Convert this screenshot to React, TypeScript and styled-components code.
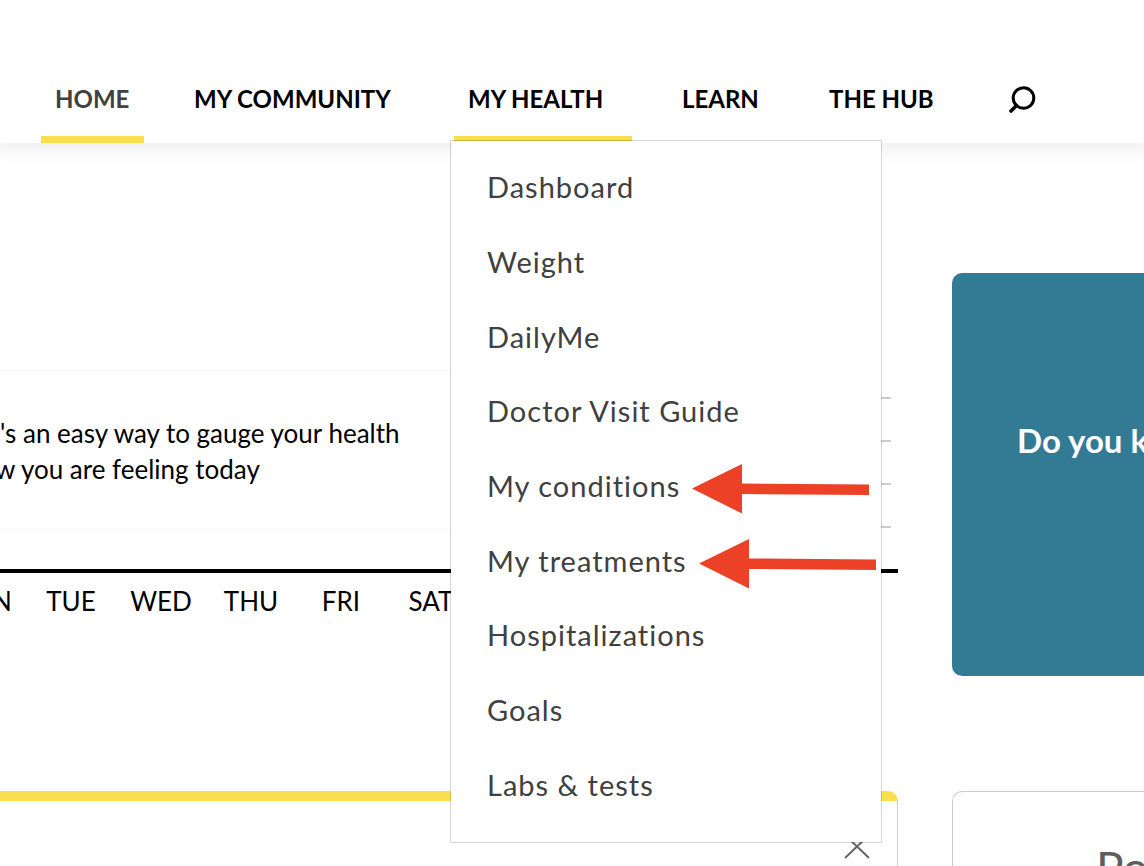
import React from "react";
import styled, { createGlobalStyle } from "styled-components";

const yellow = "#f9de4f";

const GlobalStyle = createGlobalStyle`
  *, *::before, *::after { box-sizing: border-box; }
  body {
    margin: 0;
    background: #fff;
    color: #000;
    font-family: Lato, "Open Sans", sans-serif;
    font-size: 26px;
    line-height: 36px;
    font-variant-ligatures: none;
  }
`;

const Page = styled.div`
  height: 100vh;
  overflow: hidden;
`;

const Header = styled.header`
  position: relative;
  z-index: 2;
  height: 143px;
  padding-top: 55px;
  background: #fff;
  box-shadow: 0 2px 18px 4px rgba(0, 0, 0, 0.08);
`;

const Nav = styled.nav`
  display: flex;
  gap: 36px;
  height: 100%;
  padding-left: 41px;
`;

const NavItem = styled.div<{ $width: number; $marked?: boolean }>`
  position: relative;
  flex: 0 0 ${(p) => p.$width}px;
  border-bottom: 7px solid ${(p) => (p.$marked ? yellow : "transparent")};
`;

const NavLink = styled.a<{ $current?: boolean }>`
  display: flex;
  align-items: center;
  height: 88px;
  padding-left: 14px;
  color: ${(p) => (p.$current ? "#404040" : "#000")};
  font-size: 24px;
  font-weight: 700;
  white-space: nowrap;
  text-decoration: none;
`;

const SearchButton = styled.button`
  display: flex;
  align-items: center;
  height: 90px;
  margin-left: 16px;
  padding: 0;
  border: 0;
  background: none;
`;

const Menu = styled.div`
  position: absolute;
  top: 85px;
  left: -4px;
  width: 432px;
  height: 703px;
  padding: 9px 0 0 36px;
  background: #fff;
  background-clip: padding-box;
  border: 1px solid rgba(0, 0, 0, 0.16);
`;

const MenuList = styled.ul`
  display: grid;
  grid-auto-rows: 1fr;
  height: 672px;
  margin: 0;
  padding: 0;
  list-style: none;
`;

const MenuRow = styled.li`
  display: flex;
  align-items: center;
  gap: 12px;
`;

const MenuLink = styled.a`
  color: #404040;
  font-size: 29px;
  letter-spacing: 1px;
  white-space: nowrap;
  text-decoration: none;
`;

const Columns = styled.main`
  display: grid;
  grid-template-columns: minmax(0, 1fr) 192px;
  column-gap: 54px;
`;

const Tracker = styled.section`
  padding-top: 227px;
`;

const Plot = styled.div`
  display: flex;
  align-items: flex-start;
  height: 203px;
  border-bottom: 4px solid #000;
`;

const Prompt = styled.p`
  flex: 1;
  height: 162px;
  margin: 0;
  padding-top: 44px;
  border: solid #f6f6f6;
  border-width: 1px 0;
  white-space: nowrap;
`;

const PromptLine = styled.span`
  display: block;

  & + & {
    margin-left: -5px;
  }
`;

const Ticks = styled.div`
  display: flex;
  flex-direction: column;
  gap: 41px;
  width: 60px;
  margin-right: 7px;
  padding-top: 27px;
`;

const Tick = styled.i`
  height: 2px;
  background: #ccc;
`;

const Days = styled.div`
  display: grid;
  grid-template-columns: 34px repeat(5, 90px);
  justify-items: center;
  margin: 10px 0 0 -8px;

  & > :first-child {
    justify-self: start;
  }
`;

const TipCard = styled.aside`
  height: 403px;
  margin-top: 130px;
  padding: 143px 0 0 65px;
  overflow: hidden;
  border-radius: 10px 0 0 10px;
  background: #337a95;
`;

const TipTitle = styled.h2`
  margin: 0;
  color: #fff;
  font-size: 33px;
  line-height: 48px;
  font-weight: 700;
  white-space: nowrap;
`;

const Panel = styled.section`
  display: flex;
  justify-content: flex-end;
  height: 160px;
  padding: 34px 27px 0 0;
  border-top: 10px solid ${yellow};
  border-right: 1px solid #ccc;
  border-top-right-radius: 10px;
`;

const Below = styled(Columns)`
  margin-top: 115px;
`;

const CloseButton = styled.button`
  align-self: flex-start;
  display: flex;
  padding: 0;
  border: 0;
  background: none;
`;

const SideCard = styled.section`
  height: 160px;
  padding: 46px 0 0 143px;
  overflow: hidden;
  border: solid #ccc;
  border-width: 1px 0 0 1px;
  border-top-left-radius: 10px;
`;

const SideTitle = styled.h2`
  margin: 0;
  color: #5e5e5e;
  font-size: 46px;
  line-height: 60px;
  font-weight: 400;
`;

const Arrow = () => (
  <svg width="178" height="58" viewBox="0 0 178 58" aria-hidden="true">
    <path d="M0 31.5 50 7v19.5L177 27.5v10.500L50 37v19.500z" fill="#ec4027" />
  </svg>
);

const menu = [
  { label: "Dashboard" },
  { label: "Weight" },
  { label: "DailyMe" },
  { label: "Doctor Visit Guide" },
  { label: "My conditions", flagged: true },
  { label: "My treatments", flagged: true },
  { label: "Hospitalizations" },
  { label: "Goals" },
  { label: "Labs & tests" },
];

const days = ["N", "TUE", "WED", "THU", "FRI", "SAT"];

export default function App() {
  return (
    <Page>
      <GlobalStyle />
      <Header>
        <Nav>
          <NavItem $width={103} $marked>
            <NavLink href="#" $current>HOME</NavLink>
          </NavItem>
          <NavItem $width={238}>
            <NavLink href="#">MY COMMUNITY</NavLink>
          </NavItem>
          <NavItem $width={178} $marked>
            <NavLink href="#">MY HEALTH</NavLink>
            <Menu>
              <MenuList>
                {menu.map((m) => (
                  <MenuRow key={m.label}>
                    <MenuLink href="#">{m.label}</MenuLink>
                    {m.flagged && <Arrow />}
                  </MenuRow>
                ))}
              </MenuList>
            </Menu>
          </NavItem>
          <NavItem $width={111}>
            <NavLink href="#">LEARN</NavLink>
          </NavItem>
          <NavItem $width={140}>
            <NavLink href="#">THE HUB</NavLink>
          </NavItem>
          <SearchButton aria-label="Search">
            <svg width="30" height="30" viewBox="0 0 30 30" fill="none" stroke="#000">
              <circle cx="16.5" cy="13" r="10.3" strokeWidth="3" />
              <path d="M9.500 20.500 4 26" strokeWidth="3.6" strokeLinecap="round" />
            </svg>
          </SearchButton>
        </Nav>
      </Header>

      <Columns>
        <Tracker>
          <Plot>
            <Prompt>
              <PromptLine>'s an easy way to gauge your health</PromptLine>
              <PromptLine>w you are feeling today</PromptLine>
            </Prompt>
            <Ticks>
              <Tick /><Tick /><Tick /><Tick />
            </Ticks>
          </Plot>
          <Days>
            {days.map((d) => <span key={d}>{d}</span>)}
          </Days>
        </Tracker>
        <TipCard>
          <TipTitle>Do you k</TipTitle>
        </TipCard>
      </Columns>

      <Below as="div">
        <Panel>
          <CloseButton aria-label="Close">
            <svg width="26" height="24" viewBox="0 0 26 24" fill="none" stroke="#666" strokeWidth="2">
              <path d="M1 0 25 23M25 0 1 23" />
            </svg>
          </CloseButton>
        </Panel>
        <SideCard>
          <SideTitle>Po</SideTitle>
        </SideCard>
      </Below>
    </Page>
  );
}
